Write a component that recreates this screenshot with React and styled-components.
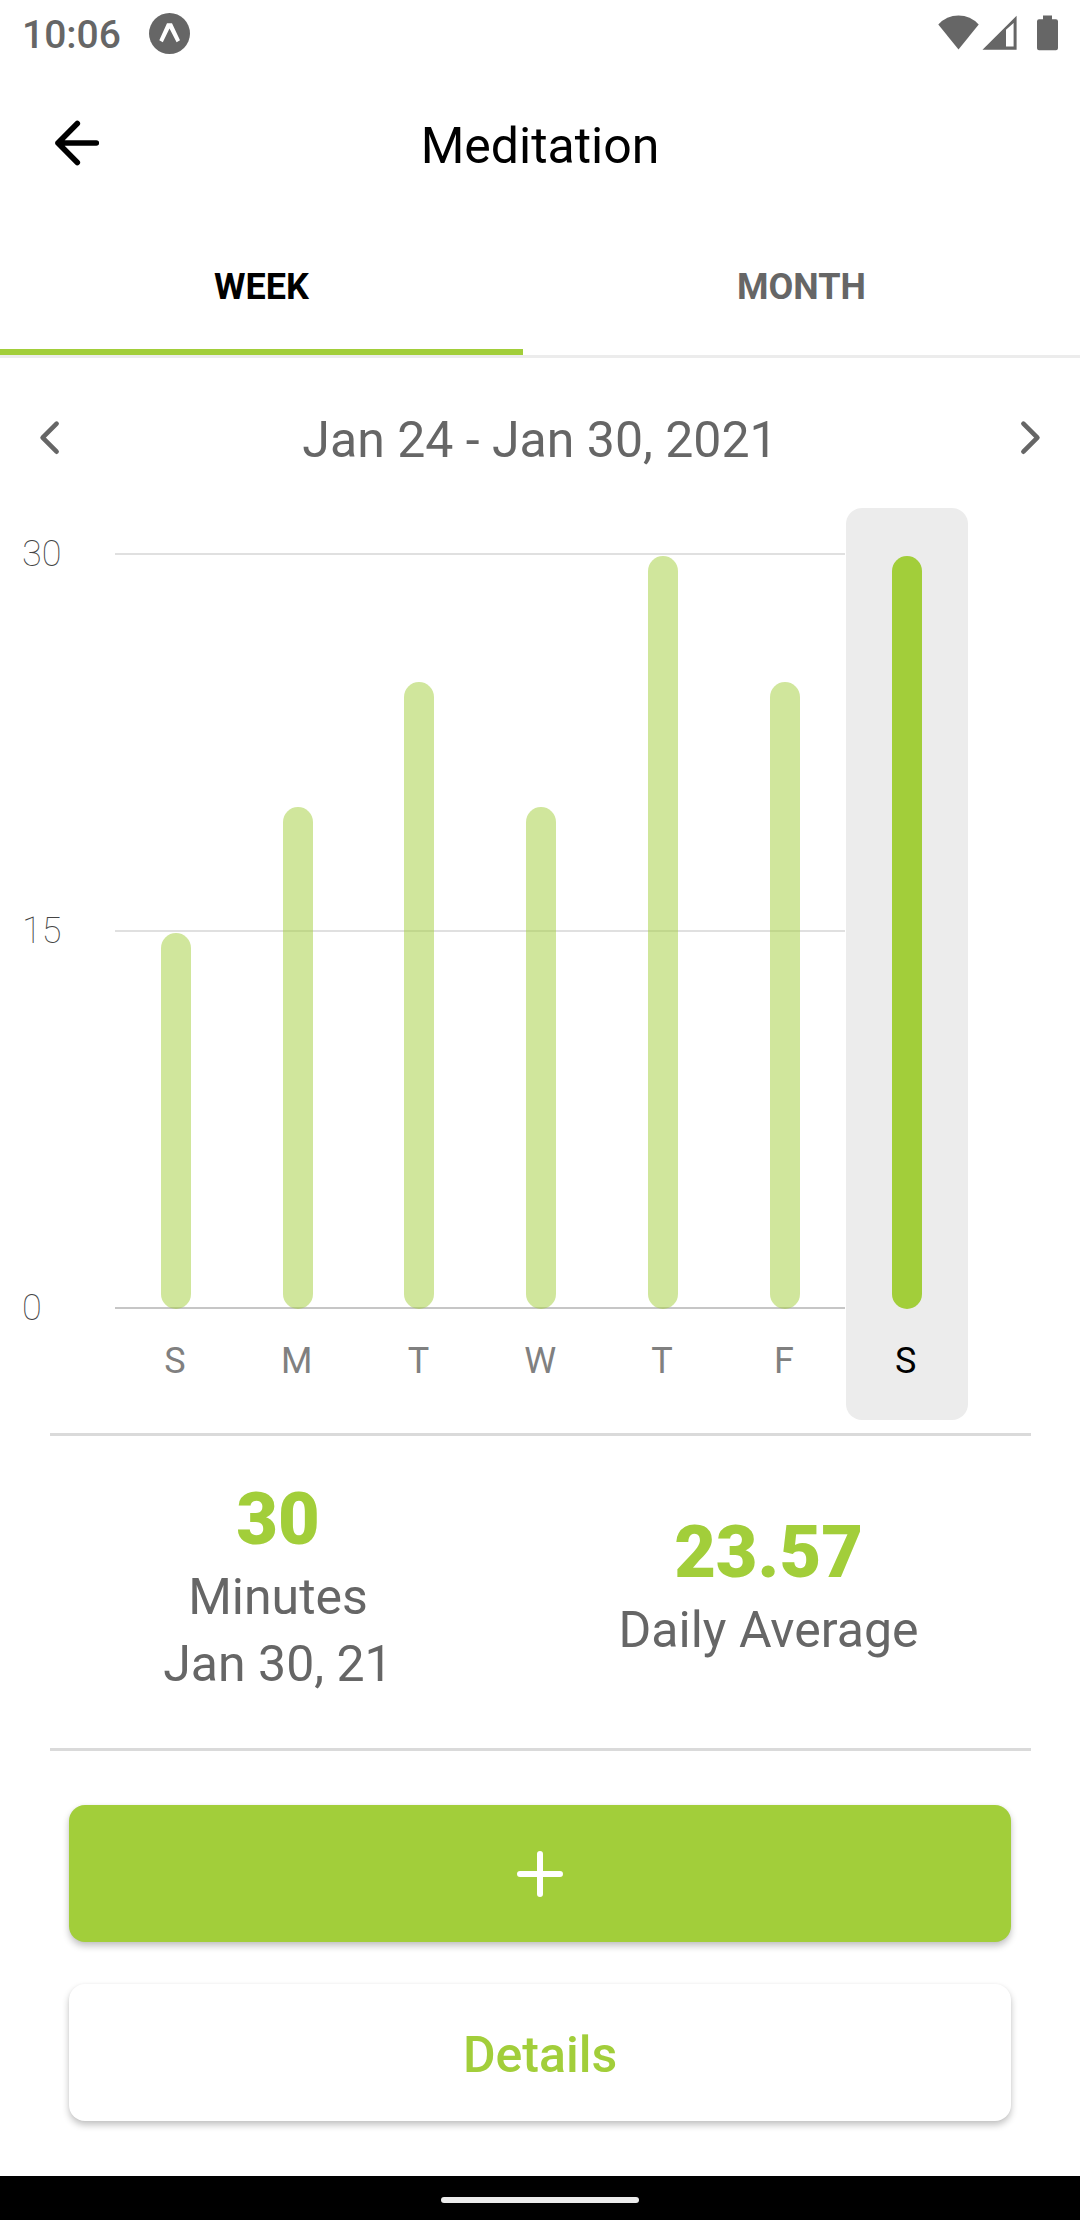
import React from 'react';
import styled, { createGlobalStyle } from 'styled-components';

const GlobalStyle = createGlobalStyle`
* {
  box-sizing: border-box;
}

body {
  margin: 0;
  background-color: white;
  font-family: Roboto, "Liberation Sans", sans-serif;
}

button {
  font-family: inherit;
  border: none;
  padding: 0;
  background: none;
}
`;

const Container = styled.div`
width: 1080px;
height: 2220px;
display: flex;
flex-direction: column;
overflow: hidden;
`;

const StatusBar = styled.div`
height: 66px;
display: flex;
align-items: center;
justify-content: space-between;
padding: 0px 22px;
color: #666;
`;

const StatusGroup = styled.div`
display: flex;
align-items: center;
`;

const Clock = styled.span`
font-size: 39px;
font-weight: 500;
line-height: 46px;
padding-top: 3px;
margin-right: 28px;
`;

const Header = styled.div`
height: 154px;
display: grid;
grid-template-columns: 1fr auto 1fr;
align-items: center;
padding: 0px 44px;
`;

const IconButton = styled.button`
display: flex;
align-items: center;
color: ${props=>props.$color || "#666"};
`;

const Title = styled.h1`
margin: 0;
padding-top: 6px;
font-size: 50px;
font-weight: 400;
line-height: 58px;
color: black;
`;

const Tabs = styled.div`
display: flex;
height: 138px;
border-bottom: 3px solid #ececec;
`;

const Tab = styled.button`
width: ${props=>props.$width}px;
padding-top: 4px;
border-bottom: 6px solid ${props=>props.$active ? "#a2ce3a" : "transparent"};
color: ${props=>props.$active ? "black" : "#666"};
font-size: 36px;
font-weight: 700;
`;

const DateRow = styled.div`
height: 150px;
display: flex;
align-items: center;
justify-content: space-between;
padding: 9px 38px 0px;
`;

const DateRange = styled.span`
padding-top: 5px;
font-size: 50px;
line-height: 58px;
color: #666;
`;

const Chart = styled.div`
position: relative;
height: 912px;
`;

/* sits behind the columns */
const GridLines = styled.div`
position: absolute;
top: 45px;
left: 22px;
width: 823px;
height: 756px;
display: flex;
flex-direction: column;
justify-content: space-between;
`;

const GridLine = styled.div`
height: 2px;
display: flex;
align-items: center;
`;

const GridLabel = styled.span`
width: 93px;
padding-bottom: 1px;
font-size: 36px;
font-weight: 100;
line-height: 42px;
color: #444;
`;

const Rule = styled.div`
flex: 1;
height: 2px;
background-color: ${props=>props.$base ? "#c6c6c6" : "#e0e0e0"};
`;

const Columns = styled.div`
position: relative;
display: flex;
height: 100%;
margin-left: 115px;
`;

const Column = styled.div`
width: 121.8px;
display: flex;
flex-direction: column;
align-items: center;
border-radius: 16px;
background-color: ${props=>props.$active ? "#ececec" : "transparent"};
`;

const BarArea = styled.div`
height: 801px;
display: flex;
align-items: flex-end;
`;

const Bar = styled.div`
width: 30px;
border-radius: 15px;
background-color: #a2ce3a;
opacity: ${props=>props.$active ? 1 : 0.5};
`;

const DayLabel = styled.span`
margin-top: 31px;
padding-right: 2px;
font-size: 36px;
line-height: 42px;
color: ${props=>props.$active ? "black" : "#808080"};
`;

const Stats = styled.div`
display: flex;
align-items: center;
height: 318px;
margin: 13px 49px 0px 50px;
padding-bottom: 12px;
border-top: 3px solid #dadada;
border-bottom: 3px solid #dadada;
`;

const Stat = styled.div`
width: ${props=>props.$width}px;
display: flex;
flex-direction: column;
align-items: center;
`;

const StatValue = styled.span`
font-size: 72px;
font-weight: 900;
line-height: 89px;
color: #a2ce3a;
`;

const StatText = styled.span`
font-size: 50px;
line-height: 67px;
color: #666;
`;

const Actions = styled.div`
display: flex;
flex-direction: column;
gap: 42px;
padding: 54px 69px 0px;
`;

const Button = styled.button`
height: 137px;
display: flex;
align-items: center;
justify-content: center;
border-radius: 16px;
background-color: ${props=>props.$primary ? "#a2ce3a" : "white"};
color: ${props=>props.$primary ? "white" : "#a2ce3a"};
font-size: 50px;
font-weight: 500;
padding-top: ${props=>props.$primary ? "0px" : "5px"};
box-shadow: 0px 4px 7px rgba(0, 0, 0, 0.24), 0px 0px 3px rgba(0, 0, 0, 0.04);
`;

const NavBar = styled.div`
height: 44px;
margin-top: auto;
padding-top: 4px;
display: flex;
align-items: center;
justify-content: center;
background-color: black;
`;

const Handle = styled.div`
width: 198px;
height: 6px;
border-radius: 3px;
background-color: #ececec;
`;

const days = [
  { label: "S", minutes: 15 },
  { label: "M", minutes: 20 },
  { label: "T", minutes: 25 },
  { label: "W", minutes: 20 },
  { label: "T", minutes: 30 },
  { label: "F", minutes: 25 },
  { label: "S", minutes: 30 },
];

const PX_PER_MINUTE = 25.1;

function ExpoIcon() {
  return (
    <svg width="41" height="41" viewBox="0 0 41 41">
      <circle cx="20.5" cy="20.5" r="20.5" fill="currentColor" />
      <path d="M18 10.3h5L31 27.3 27.6 29.3 20.5 15.5 13.8 29.3 10.3 27.3z" fill="white" />
    </svg>
  );
}

function SystemIcons() {
  return (
    <svg width="120" height="36" viewBox="0 0 120 36" fill="currentColor">
      <path d="M0.3 9.5Q8.5 0.5 20.5 0.5T40.7 9.5L20.5 34.5z" />
      <path fillRule="evenodd" d="M44.5 34.7L78.6 0.7V34.7zM68 14.8V31.4H75.6V8z" />
      <path d="M105 0.5h9v3.7h4a2.2 2.2 0 0 1 2 2v27a2.2 2.2 0 0 1-2 2h-17a2.2 2.2 0 0 1-2-2v-27a2.2 2.2 0 0 1 2-2h4z" />
    </svg>
  );
}

function BackIcon() {
  return (
    <svg width="66" height="66" viewBox="0 0 66 66" fill="none" stroke="currentColor" strokeWidth="5.6" strokeLinecap="round" strokeLinejoin="round">
      <path d="M33.3 13.5L14 33l19.300 19.500M14 33H52.300" />
    </svg>
  );
}

function Chevron({ right }) {
  return (
    <svg width="24" height="40" viewBox="0 0 24 40" fill="none" stroke="currentColor" strokeWidth="4.6" strokeLinecap="round" strokeLinejoin="round">
      <path d={right ? "M5.400 5.700L19.400 19.700 5.400 33.700" : "M18.600 5.700L4.600 19.700l14 14"} />
    </svg>
  );
}

function App() {
  return (
    <Container>
      <GlobalStyle/>
      <StatusBar>
        <StatusGroup>
          <Clock>10:06</Clock>
          <ExpoIcon/>
        </StatusGroup>
        <SystemIcons/>
      </StatusBar>
      <Header>
        <IconButton $color="black"><BackIcon/></IconButton>
        <Title>Meditation</Title>
      </Header>
      <Tabs>
        <Tab $active $width={523}>WEEK</Tab>
        <Tab $width={557}>MONTH</Tab>
      </Tabs>
      <DateRow>
        <IconButton><Chevron/></IconButton>
        <DateRange>Jan 24 - Jan 30, 2021</DateRange>
        <IconButton><Chevron right/></IconButton>
      </DateRow>
      <Chart>
        <GridLines>
          {[30, 15, 0].map(value=>(
            <GridLine key={value}>
              <GridLabel>{value}</GridLabel>
              <Rule $base={value === 0}/>
            </GridLine>
          ))}
        </GridLines>
        <Columns>
          {days.map((day, index)=>{
            const active = index === days.length - 1;
            return (
              <Column key={index} $active={active}>
                <BarArea>
                  <Bar $active={active} style={{ height: day.minutes * PX_PER_MINUTE }}/>
                </BarArea>
                <DayLabel $active={active}>{day.label}</DayLabel>
              </Column>
            );
          })}
        </Columns>
      </Chart>
      <Stats>
        <Stat $width={456}>
          <StatValue>30</StatValue>
          <StatText>Minutes</StatText>
          <StatText>Jan 30, 21</StatText>
        </Stat>
        <Stat $width={525}>
          <StatValue>23.57</StatValue>
          <StatText>Daily Average</StatText>
        </Stat>
      </Stats>
      <Actions>
        <Button $primary>
          <svg width="48" height="48" viewBox="0 0 48 48" fill="none" stroke="currentColor" strokeWidth="6" strokeLinecap="round">
            <path d="M24 4v40M4 24h40" />
          </svg>
        </Button>
        <Button>Details</Button>
      </Actions>
      <NavBar>
        <Handle/>
      </NavBar>
    </Container>
  );
}

export default App;
